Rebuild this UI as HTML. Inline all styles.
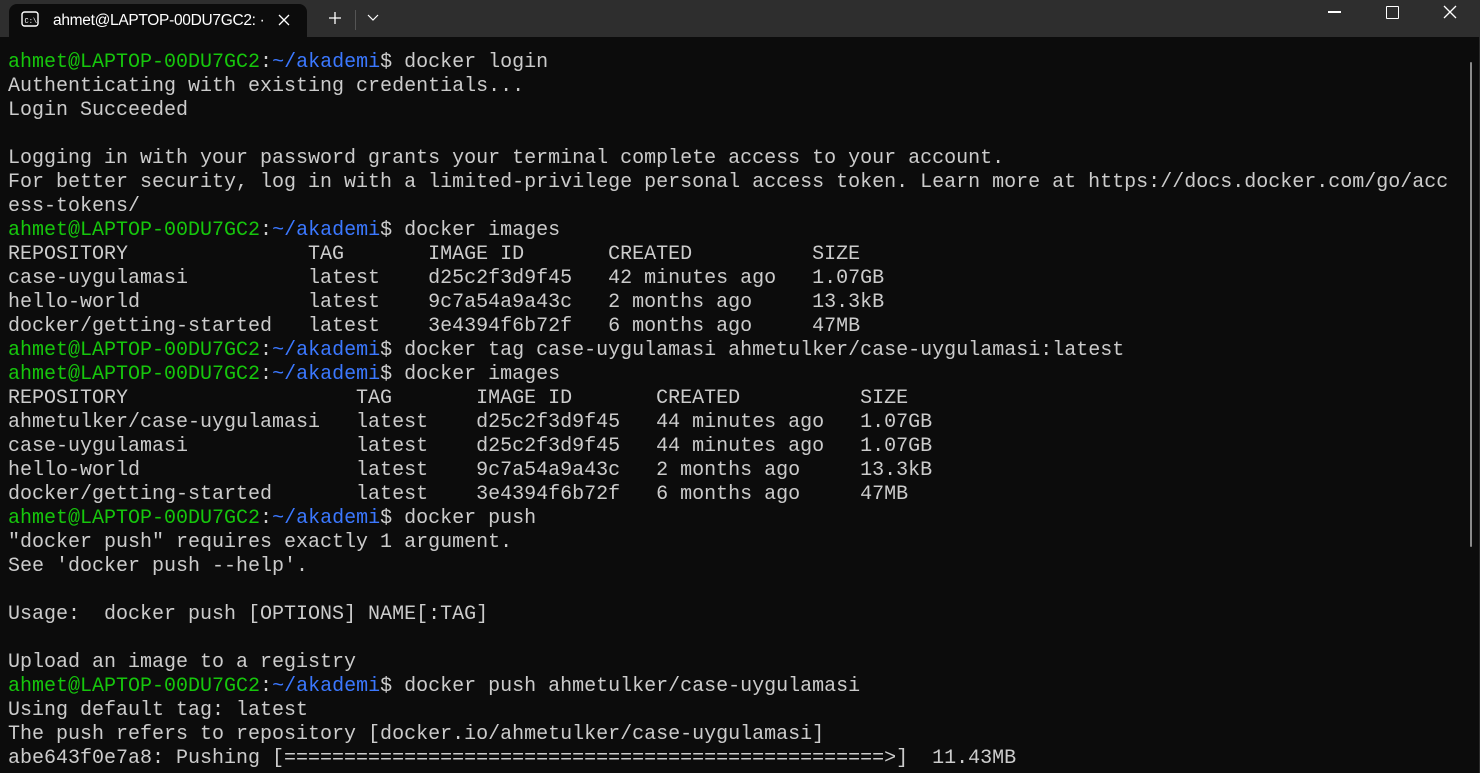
<!DOCTYPE html>
<html><head><meta charset="utf-8"><style>
html,body{margin:0;padding:0;background:#0c0c0c;width:1480px;height:773px;overflow:hidden}
.bar{position:absolute;left:0;top:0;width:1480px;height:37px;background:#2e2e2e}
.tab{position:absolute;left:9px;top:4px;width:298px;height:33px;background:#0c0c0c;border-radius:8px 8px 0 0}
.tt{position:absolute;left:44px;top:8px;font:15.5px "Liberation Sans",sans-serif;letter-spacing:-0.3px;color:#fff;white-space:nowrap}
pre{position:absolute;left:8px;top:51px;margin:0;font:20px/24px "Liberation Mono",monospace;color:#cccccc}
.g{color:#16c60c}.b{color:#3b78ff}
.sb{position:absolute;left:1470px;top:62px;width:2px;height:485px;background:#8a8a8a;border-radius:1px}
</style></head><body>
<div class="bar">
<div class="tab">
<svg style="position:absolute;left:12px;top:7px" width="18" height="16" viewBox="0 0 18 16"><rect x="1" y="1" width="16" height="14" rx="2.5" fill="none" stroke="#fff" stroke-width="1.4"/><text x="3.5" y="12" font-size="7" font-family="Liberation Mono" fill="#fff">C:\</text></svg>
<div class="tt">ahmet@LAPTOP-00DU7GC2: ·</div>
<svg style="position:absolute;left:268px;top:9px" width="14" height="14"><path d="M2 2L12 12M12 2L2 12" stroke="#fff" stroke-width="1.3"/></svg>
</div>
<svg style="position:absolute;left:328px;top:11px" width="14" height="14"><path d="M7 1V13M1 7H13" stroke="#fff" stroke-width="1.3"/></svg>
<div style="position:absolute;left:355px;top:10px;width:1px;height:20px;background:#555"></div>
<svg style="position:absolute;left:367px;top:14px" width="12" height="8"><path d="M1 1L6 6L11 1" stroke="#fff" stroke-width="1.2" fill="none"/></svg>
<div style="position:absolute;left:1328px;top:11px;width:13px;height:1.5px;background:#fff"></div>
<div style="position:absolute;left:1386px;top:6px;width:11px;height:11px;border:1.3px solid #fff;border-radius:1px"></div>
<svg style="position:absolute;left:1443px;top:5px" width="14" height="14"><path d="M1 1L13 13M13 1L1 13" stroke="#fff" stroke-width="1.3"/></svg>
</div>
<div style="position:absolute;left:1479px;top:37px;width:1px;height:736px;background:#2a2a2a"></div>
<div class="sb"></div>
<pre><span class="g">ahmet@LAPTOP-00DU7GC2</span>:<span class="b">~/akademi</span>$ docker login
Authenticating with existing credentials...
Login Succeeded

Logging in with your password grants your terminal complete access to your account.
For better security, log in with a limited-privilege personal access token. Learn more at https://docs.docker.com/go/acc
ess-tokens/
<span class="g">ahmet@LAPTOP-00DU7GC2</span>:<span class="b">~/akademi</span>$ docker images
REPOSITORY               TAG       IMAGE ID       CREATED          SIZE
case-uygulamasi          latest    d25c2f3d9f45   42 minutes ago   1.07GB
hello-world              latest    9c7a54a9a43c   2 months ago     13.3kB
docker/getting-started   latest    3e4394f6b72f   6 months ago     47MB
<span class="g">ahmet@LAPTOP-00DU7GC2</span>:<span class="b">~/akademi</span>$ docker tag case-uygulamasi ahmetulker/case-uygulamasi:latest
<span class="g">ahmet@LAPTOP-00DU7GC2</span>:<span class="b">~/akademi</span>$ docker images
REPOSITORY                   TAG       IMAGE ID       CREATED          SIZE
ahmetulker/case-uygulamasi   latest    d25c2f3d9f45   44 minutes ago   1.07GB
case-uygulamasi              latest    d25c2f3d9f45   44 minutes ago   1.07GB
hello-world                  latest    9c7a54a9a43c   2 months ago     13.3kB
docker/getting-started       latest    3e4394f6b72f   6 months ago     47MB
<span class="g">ahmet@LAPTOP-00DU7GC2</span>:<span class="b">~/akademi</span>$ docker push
"docker push" requires exactly 1 argument.
See 'docker push --help'.

Usage:  docker push [OPTIONS] NAME[:TAG]

Upload an image to a registry
<span class="g">ahmet@LAPTOP-00DU7GC2</span>:<span class="b">~/akademi</span>$ docker push ahmetulker/case-uygulamasi
Using default tag: latest
The push refers to repository [docker.io/ahmetulker/case-uygulamasi]
abe643f0e7a8: Pushing [==================================================&gt;]  11.43MB
</pre>
</body></html>
